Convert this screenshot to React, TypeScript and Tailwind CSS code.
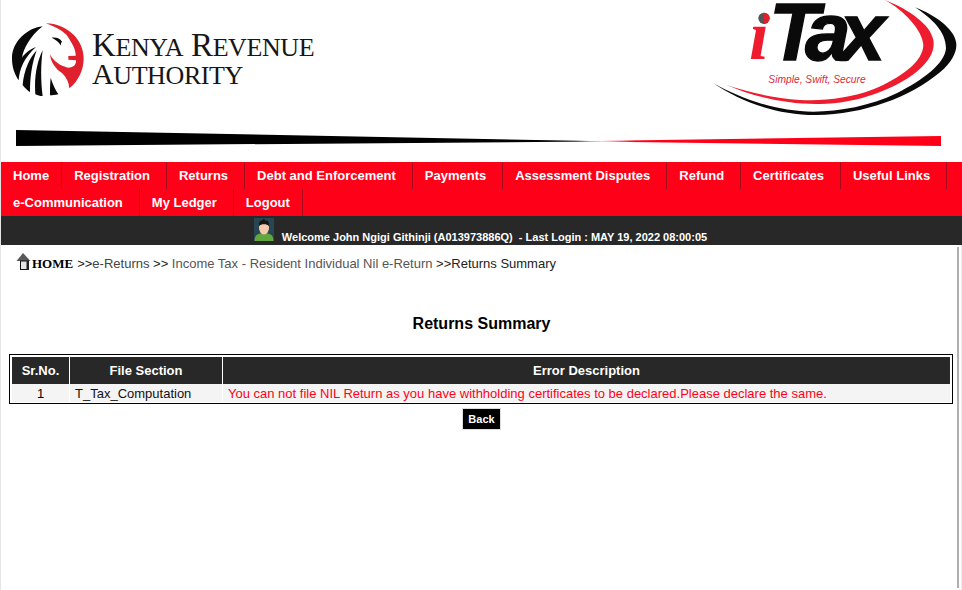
import React from 'react';

const navRows = [
  ['Home', 'Registration', 'Returns', 'Debt and Enforcement', 'Payments', 'Assessment Disputes', 'Refund', 'Certificates', 'Useful Links'],
  ['e-Communication', 'My Ledger', 'Logout'],
];

function LionLogo() {
  // drawn in 3x coordinates of the header
  return (
    <svg width="75" height="75" viewBox="33 20 225 225" className="shrink-0">
      <path d="M138 27 C200 28 250 75 251 130 C252 165 235 200 208 222 C207 205 200 190 186 176 C168 165 152 145 150 120 C160 140 180 155 204 160 C222 160 229 150 228 138 L205 136 L205 125 L227 124 C228 108 218 88 200 62 C182 45 160 35 138 27 Z" fill="#e0202c" />
      <path d="M128 36 C85 40 36 80 36 132 C36 160 44 180 56 198 C58 165 72 130 108 98 C88 105 72 120 66 130 C70 105 90 65 128 36 Z" fill="#0a0a0a" />
      <path d="M110 108 C90 130 72 165 68 212 C75 222 82 228 90 233 C90 190 95 150 110 108 Z" fill="#0a0a0a" />
      <path d="M128 108 C112 140 102 185 106 240 C113 243 120 245 128 246 C122 200 122 150 128 108 Z" fill="#0a0a0a" />
      <path d="M152 190 C150 210 150 225 150 243 C158 243 165 242 175 240 C165 225 158 208 152 190 Z" fill="#0a0a0a" />
      <path d="M155 70 C168 68 180 72 186 82 C182 86 182 90 184 94 C178 88 176 80 155 70 Z" fill="#0a0a0a" />
    </svg>
  );
}

function ItaxLogo() {
  // viewBox is 3x the page pixels, same as measured off the crop
  return (
    <svg width="272" height="129" viewBox="0 0 816 387" className="shrink-0">
      <path d="M70 250 C150 304 260 346 380 345 C520 344 660 292 750 217 C790 182 803 150 798 125 C790 85 735 45 675 22 C725 55 768 95 768 145 C765 190 700 240 620 280 C540 318 450 335 370 335 C260 335 150 295 70 250 Z" fill="#0a0a0a" />
      <path d="M110 255 C190 290 290 314 390 312 C500 310 610 270 680 215 C722 180 735 150 730 120 C722 75 660 30 585 0 C640 30 698 90 700 135 C700 185 630 235 550 268 C480 295 400 304 330 300 C250 295 170 275 110 255 Z" fill="#ee1c2e" />
      <circle cx="222" cy="55" r="17" fill="#555" />
      <path d="M222 38 A17 17 0 0 1 222 72 Z" fill="#e0202c" />
      <text x="178" y="178" fontFamily="'Liberation Serif', serif" fontStyle="italic" fontWeight="700" fontSize="210" fill="#ee1c2e">ı</text>
      <text x="237" y="180" fontFamily="'Liberation Sans', sans-serif" fontStyle="italic" fontWeight="700" fontSize="246" letterSpacing="-33" stroke="#0a0a0a" strokeWidth="4" fill="#0a0a0a">Tax</text>
      <text x="235" y="250" fontFamily="'Liberation Sans', sans-serif" fontStyle="italic" fontSize="35" textLength="292" lengthAdjust="spacingAndGlyphs" fill="#d8293c">Simple, Swift, Secure</text>
    </svg>
  );
}

function HomeIcon() {
  return (
    <svg width="16" height="17" viewBox="0 0 16 17" className="mb-[5px] shrink-0">
      <path d="M7 0 L0.5 8 L14.5 8 Z" fill="#5a5a5a" />
      <rect x="4.5" y="8" width="8" height="8.5" fill="#e4e4e4" stroke="#111" strokeWidth="1" />
      <rect x="10.5" y="8" width="2.5" height="9" fill="#222" />
    </svg>
  );
}

function Avatar() {
  return (
    <svg width="20" height="23" viewBox="0 0 20 23" className="shrink-0">
      <rect width="20" height="23" fill="#274552" />
      <path d="M0.5 23 C0.5 17 4 15 10 15 C16 15 19.5 17 19.5 23 Z" fill="#62a63e" />
      <ellipse cx="10" cy="10" rx="5" ry="6.5" fill="#f4c9ac" />
      <path d="M5 8 C4.5 3 7 2 8 2.5 L10 0.5 L11 2.5 C14 2 15.5 4 15 8 C13 5.5 7 5.5 5 8 Z" fill="#151515" />
    </svg>
  );
}

export default function App() {
  return (
    <div className="relative h-[590px] w-[962px] overflow-hidden border-l border-[#e5e5e5] bg-white font-['Liberation_Sans',sans-serif]">
      {/* Logos */}
      <div className="flex h-[129px] items-start justify-between">
        <div className="flex items-start pt-[21px] pl-[10px]">
          <LionLogo />
          <div className="ml-[6px] pt-[10px] font-['Liberation_Serif',serif] text-[33px] tracking-[-0.4px] text-[#161616]">
            <div className="h-[28px] leading-[28px]">K<span className="text-[26px]">ENYA</span> R<span className="text-[26px]">EVENUE</span></div>
            <div className="h-[28px] leading-[28px]"><span className="text-[30px]">A</span><span className="text-[26px]">UTHORITY</span></div>
          </div>
        </div>
        <ItaxLogo />
      </div>

      {/* Black to red wedge */}
      <svg width="961" height="33" viewBox="0 0 961 33" className="block">
        <defs>
          <linearGradient id="wedge" gradientUnits="userSpaceOnUse" x1="0" x2="961" y1="0" y2="0">
            <stop offset="0.6" stopColor="#000" />
            <stop offset="0.625" stopColor="#f5c0c6" />
            <stop offset="0.66" stopColor="#ff0019" />
          </linearGradient>
        </defs>
        <path d="M15 1 L590 12 L940 7 L940 17 L590 12.5 L15 17 Z" fill="url(#wedge)" />
      </svg>

      {/* Menu */}
      <nav className="bg-[#ff0019] text-[13px] leading-[27px] font-bold text-white">
        {navRows.map((row) => (
          <ul key={row[0]} className="flex h-[27px]">
            {row.map((item) => (
              <li key={item} className={`border-r border-[#a50d1c] pl-[12px] whitespace-nowrap ${item === 'Home' || item === 'Logout' ? 'pr-[12px]' : 'pr-[16px]'}`}>{item}</li>
            ))}
          </ul>
        ))}
      </nav>

      {/* Welcome */}
      <div className="flex h-[29px] items-end justify-center bg-[#282828] pr-[2px] text-[11px] leading-[16px] font-bold text-white">
        <span className="mr-[8px] mb-[4px]"><Avatar /></span>
        <span className="whitespace-pre">Welcome John Ngigi Githinji (A013973886Q)  - Last Login : MAY 19, 2022 08:00:05</span>
      </div>

      {/* Breadcrumb */}
      <div className="flex h-[38px] items-center pb-[1px] pl-[15px] text-[13px] whitespace-pre text-[#222]">
        <HomeIcon />
        <span className="mt-[1px] font-['Liberation_Serif',serif] text-[13px] font-bold text-black">HOME</span>
        <span className="ml-[4px]">&gt;&gt;</span>
        <span className="text-[#444]">e-Returns </span>
        <span>&gt;&gt; </span>
        <span className="text-[#555]">Income Tax - Resident Individual Nil e-Return </span>
        <span>&gt;&gt;Returns Summary</span>
      </div>

      <h1 className="mt-[30px] text-center text-[16px] leading-[22px] font-bold text-black">Returns Summary</h1>

      {/* Error table */}
      <div className="mt-[19px] mr-[9px] ml-[8px] border border-black px-[2px] pt-[2px] pb-[1px]">
        <table className="w-full table-fixed border-separate border-spacing-0 text-[13px] leading-[18px]">
          <thead>
            <tr className="h-[27px] bg-[#282828] font-bold text-white">
              <th className="w-[58px] border-r border-white">Sr.No.</th>
              <th className="w-[153px] border-r border-white">File Section</th>
              <th>Error Description</th>
            </tr>
          </thead>
          <tbody>
            <tr className="h-[18px] bg-[#f4f4f4] leading-[17px]">
              <td className="border-r border-white pt-[1px] text-center">1</td>
              <td className="border-r border-white pt-[1px] pl-[5px] text-[#111]">T_Tax_Computation</td>
              <td className="pt-[1px] pl-[5px] text-[#ff0019]">You can not file NIL Return as you have withholding certificates to be declared.Please declare the same.</td>
            </tr>
          </tbody>
        </table>
      </div>

      <div className="mt-[4px] flex justify-center">
        <button className="h-[22px] w-[39px] border border-[#ddd] bg-black text-[11px] font-bold text-white">Back</button>
      </div>

      {/* page scrollbar thumb and window edge */}
      <div className="absolute top-[247px] right-[3px] bottom-[2px] w-[2px] bg-[#b0b0b0]" />
      <div className="absolute top-[245px] right-0 bottom-0 w-px bg-[#eeeeee]" />
    </div>
  );
}
